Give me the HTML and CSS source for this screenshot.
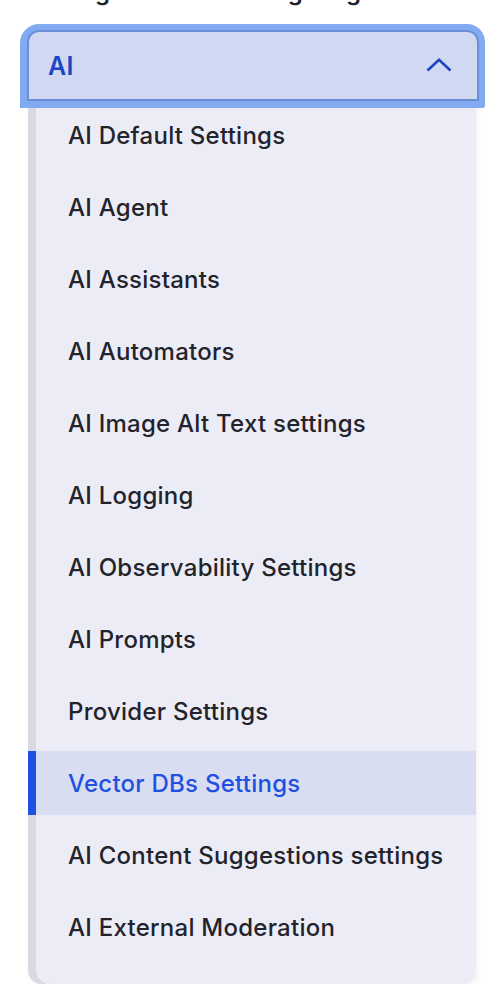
FILE: index.html
```html
<!DOCTYPE html>
<html lang="en">
<head>
<meta charset="utf-8">
<title>AI settings menu</title>
<link rel="stylesheet" href="styles.css">
</head>
<body>
<div class="page">
  <div class="label">Settings menu for navigating</div>
  <button class="select" type="button">
    <span class="select-value">AI</span>
    <svg class="chevron" width="26" height="14" viewBox="0 0 26 14" aria-hidden="true">
      <path d="M1.5 12.5 L13 1.8 L24.5 12.5" fill="none" stroke="currentColor" stroke-width="2.6" stroke-linejoin="miter"/>
    </svg>
  </button>
  <ul class="menu">
    <li class="item">AI Default Settings</li>
    <li class="item">AI Agent</li>
    <li class="item">AI Assistants</li>
    <li class="item">AI Automators</li>
    <li class="item">AI Image Alt Text settings</li>
    <li class="item">AI Logging</li>
    <li class="item">AI Observability Settings</li>
    <li class="item">AI Prompts</li>
    <li class="item">Provider Settings</li>
    <li class="item active">Vector DBs Settings</li>
    <li class="item">AI Content Suggestions settings</li>
    <li class="item">AI External Moderation</li>
  </ul>
</div>
</body>
</html>
```
FILE: styles.css
```css
html, body {
  margin: 0;
  padding: 0;
  background: #ffffff;
}

body {
  font-family: Inter, "Noto Sans", "Liberation Sans", sans-serif;
  color: #22232b;
  overflow: hidden;
}

.page {
  display: flex;
  flex-direction: column;
  align-items: flex-start;
}

.label {
  margin: -22px 0 0 28px;
  font-size: 24px;
  line-height: 28px;
  font-weight: 600;
  color: #22232b;
  height: 28px;
  white-space: nowrap;
}

.select {
  position: relative;
  z-index: 1;
  margin: 24px 0 0 27px;
  width: 452px;
  height: 71px;
  box-sizing: border-box;
  display: flex;
  align-items: center;
  justify-content: space-between;
  padding: 0 25px 0 19px;
  background: #d0d8f2;
  border: 2px solid #6b8fd6;
  border-radius: 12px 12px 0 0;
  box-shadow: 0 0 0 6px #82aaf0, -1px 1px 0 6px #82aaf0;
  font-family: inherit;
  color: #1c44c3;
  cursor: pointer;
}

.select-value {
  font-size: 25px;
  font-weight: 600;
  line-height: 30px;
  letter-spacing: 0.2px;
}

.chevron {
  display: block;
  color: #1c44c3;
  margin-top: -2px;
}

.menu {
  list-style: none;
  margin: 0 0 0 28px;
  padding: 2px 0 25px 0;
  width: 448px;
  box-sizing: border-box;
  display: flex;
  flex-direction: column;
  gap: 8px;
  background: #ececf6;
  border-radius: 0 0 14px 14px;
  box-shadow: inset 8px 0 0 #d9d9e1, 2px 3px 6px rgba(0, 0, 0, 0.05);
}

.item {
  height: 64px;
  display: flex;
  align-items: center;
  padding-left: 40px;
  font-size: 24px;
  font-weight: 500;
  letter-spacing: 0.25px;
  color: #22232b;
  white-space: nowrap;
}

.item.active {
  background: #d8ddf1;
  color: #2150e0;
  box-shadow: inset 8px 0 0 #1f4fe0;
}
```
